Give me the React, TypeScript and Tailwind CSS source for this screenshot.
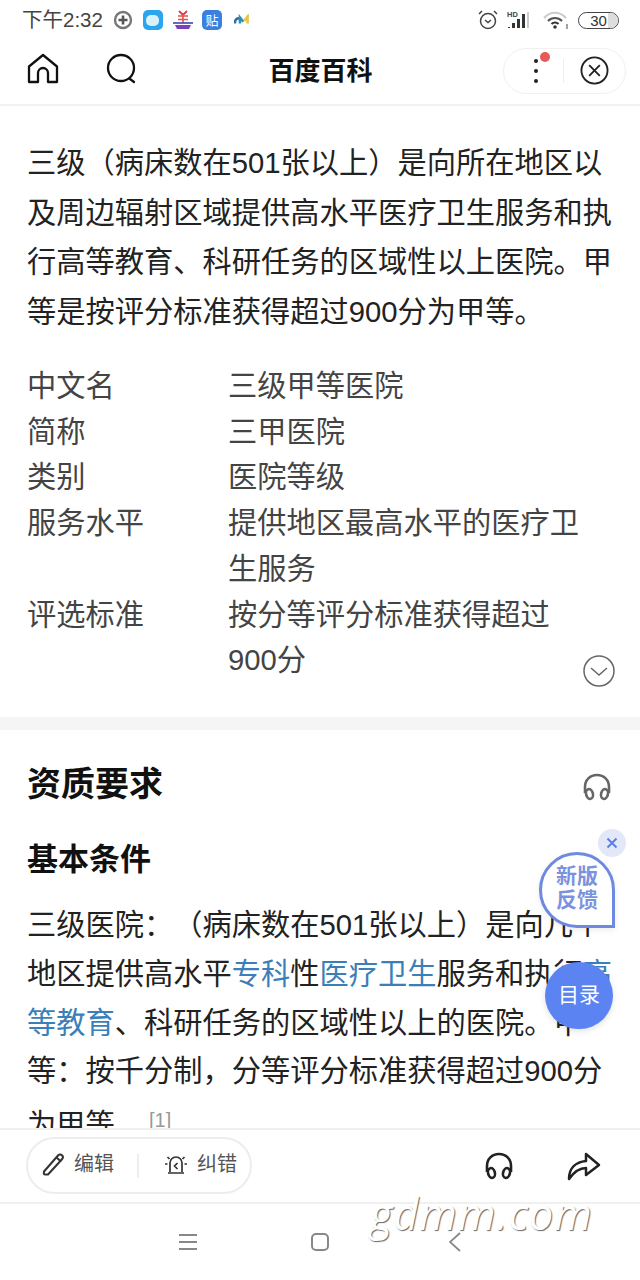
import React from "react";

const infoRows = [
  { label: "中文名", lines: ["三级甲等医院"] },
  { label: "简称", lines: ["三甲医院"] },
  { label: "类别", lines: ["医院等级"] },
  { label: "服务水平", lines: ["提供地区最高水平的医疗卫", "生服务"] },
  { label: "评选标准", lines: ["按分等评分标准获得超过", "900分"] },
];

function Headphones({ className }: { className: string }) {
  return (
    <svg viewBox="0 0 30 30" fill="none" stroke="currentColor" strokeWidth="2.6" className={className}>
      <path d="M3 21V15C3 8 8 3 15 3s12 5 12 12v6" />
      <ellipse cx="7.5" cy="22" rx="3.4" ry="5" transform="rotate(-14 7.5 22)" />
      <ellipse cx="22.5" cy="22" rx="3.4" ry="5" transform="rotate(14 22.5 22)" />
    </svg>
  );
}

function StatusBar() {
  return (
    <div className="flex h-[36px] shrink-0 items-center justify-between pl-[22px] pr-[21px] pt-[4px]">
      <div className="flex items-center">
        <span className="text-[20.5px] leading-none text-[#444]">下午2:32</span>
        <svg viewBox="0 0 20 20" className="ml-[10px] h-[20px] w-[20px]">
          <circle cx="10" cy="10" r="8" fill="none" stroke="#777" strokeWidth="2.4" />
          <path d="M10 5.5v9M5.5 10h9" stroke="#555" strokeWidth="2.6" />
        </svg>
        <div className="ml-[10px] flex h-[20px] w-[20px] items-center justify-center rounded-[5px] bg-[#2aa5ee]">
          <div className="h-[11px] w-[13px] rounded-[5px] bg-[#d9f1fb]" />
        </div>
        <svg viewBox="0 0 22 22" className="ml-[9px] h-[22px] w-[22px]">
          <path d="M7 2l3 3h2l3-3" fill="none" stroke="#e33a4a" strokeWidth="1.8" />
          <path d="M6 7h10M6 10.5h10M11 5v9" stroke="#e0524d" strokeWidth="1.6" />
          <path d="M1 14h20" stroke="#3b47b5" strokeWidth="1.6" />
          <path d="M3 16h16l-2 4H5z" fill="#7a3fc2" />
        </svg>
        <div className="ml-[8px] flex h-[20px] w-[20px] items-center justify-center rounded-[5px] bg-[#3b7fe0] text-[13px] leading-none text-white">
          贴
        </div>
        <svg viewBox="0 0 20 14" className="ml-[12px] h-[12px] w-[17px]">
          <path d="M1 11c0-6 5-8 6-4" fill="none" stroke="#2b6f9e" strokeWidth="3" />
          <path d="M7 11V4l4 5" fill="none" stroke="#2f8fb0" strokeWidth="3" />
          <path d="M12 8l4-5v8" fill="none" stroke="#e8c44a" strokeWidth="3" />
        </svg>
      </div>
      <div className="flex items-center">
        <svg viewBox="0 0 22 22" fill="none" stroke="#444" strokeWidth="1.5" className="h-[22px] w-[22px]">
          <circle cx="11" cy="12" r="7.5" />
          <path d="M8 11l3 2.5 3-2.5M2 5l3-3M20 5l-3-3" />
        </svg>
        <svg viewBox="0 0 26 20" className="ml-[8px] h-[20px] w-[26px]">
          <text x="0" y="7" fontSize="7.5" fontWeight="700" fill="#444" fontFamily="'Liberation Sans', sans-serif">HD</text>
          <path d="M1 18h2v-1H1zM5 18h3v-5H5zM10 18h3V9h-3zM15 18h3V4h-3z" fill="#333" />
          <path d="M20 18h2V2h-2z" fill="#ccc" />
        </svg>
        <svg viewBox="0 0 26 20" fill="none" className="ml-[10px] h-[20px] w-[26px]">
          <path d="M1 8c6-7 16-7 22 0" stroke="#ccc" strokeWidth="2.2" />
          <path d="M5 11c4-4 10-4 14 0" stroke="#555" strokeWidth="2.2" />
          <path d="M8.5 14c2-2 5-2 7 0" stroke="#333" strokeWidth="2.2" />
          <circle cx="12" cy="17" r="1.8" fill="#333" />
          <path d="M24 14v5" stroke="#666" strokeWidth="1.2" />
        </svg>
        <div className="relative ml-[9px] flex h-[17px] w-[41px] items-center justify-center overflow-hidden rounded-full border border-[#444] text-[15px] leading-none text-[#333]">
          <div className="absolute inset-y-0 right-0 w-[10px] bg-[#ddd]" />
          <span className="relative">30</span>
        </div>
      </div>
    </div>
  );
}

function NavBar() {
  return (
    <div className="flex h-[70px] shrink-0 items-center border-b-2 border-[#f1f1f1] pb-[2px] pl-[27px] pr-[14px]">
      <svg viewBox="0 0 32 32" fill="none" stroke="#111" strokeWidth="2.3" strokeLinejoin="round" className="h-[32px] w-[32px]">
        <path d="M2 13.5L16 2l14 11.5V29H21V20a5 5 0 0 0-10 0v9H2z" />
      </svg>
      <svg viewBox="0 0 32 32" fill="none" stroke="#111" strokeWidth="2.3" className="ml-[47px] h-[32px] w-[32px]">
        <circle cx="15" cy="15" r="13" />
        <path d="M24 26l4 3" strokeLinecap="round" />
      </svg>
      <div className="flex-1 pt-[4px] text-center text-[26px] font-bold leading-none text-[#111]">百度百科</div>
      <div className="mt-[3px] flex h-[46px] w-[123px] items-center rounded-full border border-[#f0f0f0]">
        <div className="relative ml-[29px] flex h-[24px] w-[5px] flex-col items-center justify-between">
          <div className="h-[4px] w-[4px] rounded-full bg-[#222]" />
          <div className="h-[4px] w-[4px] rounded-full bg-[#222]" />
          <div className="h-[4px] w-[4px] rounded-full bg-[#222]" />
          <div className="absolute left-[7px] top-[-7px] h-[10px] w-[10px] rounded-full bg-[#e85a5a]" />
        </div>
        <div className="ml-[25px] h-[24px] w-px bg-[#eee]" />
        <svg viewBox="0 0 30 30" fill="none" stroke="#222" strokeWidth="1.9" className="ml-[16px] h-[29px] w-[29px]">
          <circle cx="15" cy="15" r="13.5" />
          <path d="M9.5 9.5l11 11M20.5 9.5l-11 11" />
        </svg>
      </div>
    </div>
  );
}

function Content() {
  return (
    <div className="relative min-h-0 flex-1 overflow-hidden">
      <div className="px-[27px] pt-[33px] text-[29.25px] leading-[49.5px] text-[#222]">
        <div className="whitespace-nowrap">三级（病床数在501张以上）是向所在地区以</div>
        <div className="whitespace-nowrap">及周边辐射区域提供高水平医疗卫生服务和执</div>
        <div className="whitespace-nowrap">行高等教育、科研任务的区域性以上医院。甲</div>
        <div className="whitespace-nowrap">等是按评分标准获得超过900分为甲等。</div>
      </div>

      <div className="relative mt-[27px] flex flex-col px-[27px] text-[29.25px] leading-[45.7px] text-[#444]">
        {infoRows.map((row) => (
          <div key={row.label} className="flex">
            <div className="w-[201px] shrink-0">{row.label}</div>
            <div>
              {row.lines.map((line) => (
                <div key={line} className="whitespace-nowrap">
                  {line}
                </div>
              ))}
            </div>
          </div>
        ))}
        <svg viewBox="0 0 32 32" fill="none" stroke="#666" strokeWidth="1.5" className="absolute bottom-[-3px] right-[25px] h-[32px] w-[32px]">
          <circle cx="16" cy="16" r="15" />
          <path d="M8 13l8 7 8-7" />
        </svg>
      </div>

      <div className="mt-[33px] h-[13px] bg-[#f5f5f5]" />

      <div className="flex items-center justify-between pl-[27px] pr-[28px] pt-[31px]">
        <div className="text-[34px] font-bold leading-[46px] text-[#111]">资质要求</div>
        <Headphones className="mt-[6px] h-[30px] w-[30px] text-[#666]" />
      </div>

      <div className="px-[27px] pt-[30px] text-[31px] font-bold leading-[46px] text-[#111]">基本条件</div>

      <div className="px-[27px] pt-[18px] text-[29.25px] leading-[48.8px] text-[#222]">
        <div className="whitespace-nowrap">三级医院：（病床数在501张以上）是向几个</div>
        <div className="whitespace-nowrap">
          地区提供高水平<span className="text-[#3b7fb8]">专科</span>性<span className="text-[#3b7fb8]">医疗卫生</span>服务和执行<span className="text-[#3b7fb8]">高</span>
        </div>
        <div className="whitespace-nowrap">
          <span className="text-[#3b7fb8]">等教育</span>、科研任务的区域性以上的医院。甲
        </div>
        <div className="whitespace-nowrap">等：按千分制，分等评分标准获得超过900分</div>
        <div className="whitespace-nowrap">
          为甲等。<span className="ml-[5px] align-[8px] text-[20px] text-[#999]">[1]</span>
        </div>
      </div>

      <div className="absolute left-[598px] top-[723px] flex h-[28px] w-[28px] items-center justify-center rounded-full bg-[#e3e8f8]">
        <svg viewBox="0 0 12 12" stroke="#5c7fe0" strokeWidth="2" className="h-[12px] w-[12px]">
          <path d="M1.5 1.5l9 9M10.5 1.5l-9 9" />
        </svg>
      </div>
      <div className="absolute left-[539px] top-[746px] flex h-[76px] w-[76px] flex-col items-center justify-center rounded-[38px] rounded-br-none border-[3px] border-[#6d8ae0] bg-white pb-[5px] text-[21px] font-bold leading-[24px] text-[#7b93de] shadow-[0_2px_6px_rgba(0,0,0,0.08)]">
        <span>新版</span>
        <span>反馈</span>
      </div>
      <div className="absolute left-[545px] top-[856px] flex h-[67px] w-[68px] items-center justify-center rounded-full bg-[#5b84f2] pb-[2px] text-[21px] text-white shadow-[0_2px_6px_rgba(0,0,0,0.12)]">
        目录
      </div>
    </div>
  );
}

function BottomBar() {
  return (
    <div className="flex h-[76px] shrink-0 items-center border-y-2 border-[#f0f0f0] bg-white pb-[1px] pl-[26px] pr-[39px]">
      <div className="flex h-[57px] w-[226px] items-center rounded-full border-2 border-[#ededed] text-[20px] leading-none text-[#555]">
        <svg viewBox="0 0 24 24" fill="none" stroke="#333" strokeWidth="2" strokeLinejoin="round" className="mb-[3px] ml-[14px] h-[24px] w-[24px]">
          <path d="M2 19.5L16 3.5c1.2-1.3 3-1.3 4 -.3s1.2 2.7 0 4L6 22.5H3c-.8 0-1.2-.5-1.2-1z" />
          <path d="M14.5 5.5l4.5 4" />
        </svg>
        <span className="ml-[8px] pb-[4px]">编辑</span>
        <div className="ml-[23px] h-[24px] w-[2px] bg-[#eee]" />
        <svg viewBox="0 0 24 24" fill="none" stroke="#333" strokeWidth="1.7" className="mb-[4px] ml-[25px] h-[24px] w-[24px]">
          <path d="M6 20v-9a6 6 0 0 1 12 0v9M4 21h16" />
          <path d="M13.5 11l-3 3 3 3M1 12h2.5M20.500 12H23M3.500 5l2 2M20.500 5l-2 2" />
        </svg>
        <span className="ml-[9px] pb-[4px]">纠错</span>
      </div>
      <Headphones className="ml-auto h-[30px] w-[30px] text-[#222]" />
      <svg viewBox="0 0 34 30" fill="none" stroke="#222" strokeWidth="2.500" strokeLinejoin="round" className="ml-[53px] h-[30px] w-[34px]">
        <path d="M2 28C2 17 9 11 19 10V3l13 11-13 10v-7c-7 0-12 4-17 11z" />
      </svg>
    </div>
  );
}

function SystemNav() {
  return (
    <div className="relative flex h-[76px] shrink-0 items-center bg-white pl-[179px]">
      <div className="flex h-[16px] w-[18px] flex-col justify-between">
        <div className="h-[2px] bg-[#888]" />
        <div className="h-[2px] bg-[#888]" />
        <div className="h-[2px] bg-[#888]" />
      </div>
      <div className="ml-[114px] h-[18px] w-[18px] rounded-[5px] border-2 border-[#888]" />
      <svg viewBox="0 0 12 20" fill="none" stroke="#888" strokeWidth="1.8" className="ml-[120px] h-[20px] w-[12px]">
        <path d="M11 1L1 10l10 9" />
      </svg>
      <div className="absolute left-[370px] top-[-18px] font-['Open_Sans',sans-serif] text-[43px] font-normal italic leading-[56px] tracking-[1.1px] text-white [text-shadow:1px_1px_1px_#666]">
        gdmm.com
      </div>
    </div>
  );
}

export default function App() {
  return (
    <div className="flex h-[1280px] w-[640px] flex-col overflow-hidden bg-white font-['Liberation_Sans','Noto_Sans_CJK_SC',sans-serif] [text-spacing-trim:space-all]">
      <StatusBar />
      <NavBar />
      <Content />
      <BottomBar />
      <SystemNav />
    </div>
  );
}
